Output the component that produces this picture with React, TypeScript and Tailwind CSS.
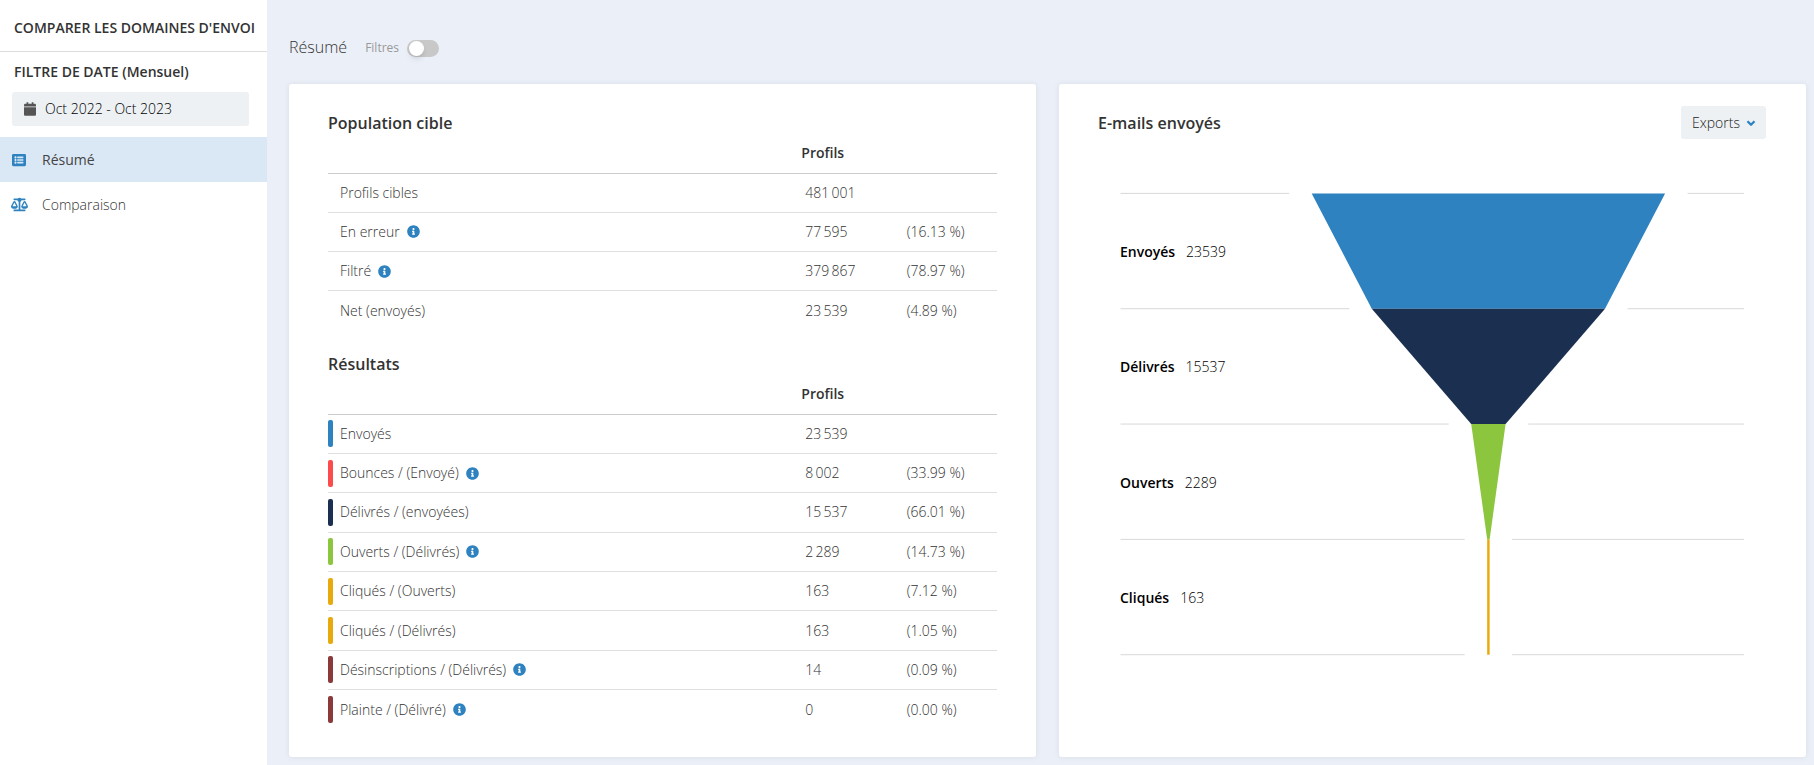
import { useState } from 'react';
import { ChevronDown } from 'lucide-react';
import { FaBalanceScale, FaCalendar, FaInfoCircle, FaListAlt } from 'react-icons/fa';

interface Row {
  label: string;
  value: string;
  percent?: string;
  info?: boolean;
  color?: string;
}

interface Step {
  label: string;
  value: number;
  color: string;
}

const POPULATION: Row[] = [
  { label: 'Profils cibles', value: '481\u2009001' },
  { label: 'En erreur', value: '77\u2009595', percent: '(16.13 %)', info: true },
  { label: 'Filtré', value: '379\u2009867', percent: '(78.97 %)', info: true },
  { label: 'Net (envoyés)', value: '23\u2009539', percent: '(4.89 %)' },
];

const RESULTS: Row[] = [
  { label: 'Envoyés', value: '23\u2009539', color: 'bg-[#2e82c0]' },
  { label: 'Bounces / (Envoyé)', value: '8\u2009002', percent: '(33.99 %)', info: true, color: 'bg-[#fb4b4b]' },
  { label: 'Délivrés / (envoyées)', value: '15\u2009537', percent: '(66.01 %)', color: 'bg-[#1b2f50]' },
  { label: 'Ouverts / (Délivrés)', value: '2\u2009289', percent: '(14.73 %)', info: true, color: 'bg-[#8cc63f]' },
  { label: 'Cliqués / (Ouverts)', value: '163', percent: '(7.12 %)', color: 'bg-[#e8a90c]' },
  { label: 'Cliqués / (Délivrés)', value: '163', percent: '(1.05 %)', color: 'bg-[#e8a90c]' },
  { label: 'Désinscriptions / (Délivrés)', value: '14', percent: '(0.09 %)', info: true, color: 'bg-[#8b3a3a]' },
  { label: 'Plainte / (Délivré)', value: '0', percent: '(0.00 %)', info: true, color: 'bg-[#8b3a3a]' },
];

const STEPS: Step[] = [
  { label: 'Envoyés', value: 23539, color: '#2e82c0' },
  { label: 'Délivrés', value: 15537, color: '#1b2f50' },
  { label: 'Ouverts', value: 2289, color: '#8cc63f' },
  { label: 'Cliqués', value: 163, color: '#e8a90c' },
];

// Funnel geometry, in viewBox units
const CHART_W = 625;
const CENTER = 368.4;
const MAX_W = 353.4;
const STEP_H = 115.33;
const LINE_GAP = 22.5;

function Funnel({ steps }: { steps: Step[] }) {
  const half = (i: number) => (steps[Math.min(i, steps.length - 1)].value / steps[0].value) * (MAX_W / 2);
  const y = (i: number) => 1.4 + i * STEP_H;

  return (
    <svg viewBox={`0 0 ${CHART_W} 464`} className="block w-full" role="img" aria-label="E-mails envoyés">
      {[...steps, null].map((_, i) => (
        <g key={i} stroke="#d8d8d8" strokeWidth="1">
          <line x1="0.5" x2={CENTER - half(i) - LINE_GAP} y1={y(i)} y2={y(i)} />
          <line x1={CENTER + half(i) + LINE_GAP} x2="624" y1={y(i)} y2={y(i)} />
        </g>
      ))}
      {steps.map((s, i) => (
        <g key={s.label}>
          <polygon
            fill={s.color}
            points={`${CENTER - half(i)},${y(i)} ${CENTER + half(i)},${y(i)} ${CENTER + half(i + 1)},${y(i + 1)} ${CENTER - half(i + 1)},${y(i + 1)}`}
          />
          <text x="0" y={y(i) + STEP_H / 2 + 6} fontSize="14" fill="#000">
            <tspan fontWeight="600">{s.label}</tspan>
            <tspan dx="11" fontWeight="300">{s.value}</tspan>
          </text>
        </g>
      ))}
    </svg>
  );
}

function StatsTable({ title, rows, className }: { title: string; rows: Row[]; className: string }) {
  return (
    <table aria-label={title} className={`w-full table-fixed border-collapse text-sm ${className}`}>
      <thead>
        <tr className="border-b border-[#cccccc] h-[34px]">
          <td className="w-[70%]" />
          <th className="w-[15%] pl-[5px] pb-1.5 text-left align-middle font-semibold">Profils</th>
          <td className="w-[15%]" />
        </tr>
      </thead>
      <tbody>
        {rows.map((r) => (
          <tr key={r.label} className="h-[39px] border-b border-[#e0e0e0] last:border-b-0">
            <td>
              <div className={`flex items-center ${r.color ? 'gap-[7px]' : 'pl-3'}`}>
                {r.color && <span className={`h-[27px] w-[5px] rounded-xs ${r.color}`} />}
                <span>{r.label}</span>
                {r.info && <FaInfoCircle className={`size-[13px] text-[#2e82c0] ${r.color ? '' : 'ml-[7px]'}`} />}
              </div>
            </td>
            <td className="pl-[9px]">{r.value}</td>
            <td className="pl-2.5">{r.percent}</td>
          </tr>
        ))}
      </tbody>
    </table>
  );
}

export default function App() {
  const [filters, setFilters] = useState(false);

  return (
    <div className="flex min-h-screen bg-[#ebeff7] font-['Open_Sans',sans-serif] text-sm font-light text-[#333333]">
      <aside className="w-[267px] shrink-0 bg-white">
        <h1 className="flex h-[52px] items-center border-b border-[#dddddd] pl-3.5 pt-1 whitespace-nowrap font-semibold">
          COMPARER LES DOMAINES D'ENVOI
        </h1>
        <h2 className="flex h-10 items-center pl-3.5 font-semibold">FILTRE DE DATE (Mensuel)</h2>
        <button className="ml-3 mb-[11px] flex h-[34px] w-[237px] items-center gap-[9px] rounded-[3px] bg-[#edf1f4] pl-3 text-black">
          <FaCalendar className="h-3.5 w-3 text-[#555555]" />
          Oct 2022 - Oct 2023
        </button>
        <nav>
          <a href="#resume" className="flex h-[45px] items-center gap-4 bg-[#dae8f5] pl-3 font-normal text-[#444444]">
            <FaListAlt className="size-3.5 text-[#2e82c0]" />
            Résumé
          </a>
          <a href="#comparaison" className="flex h-[45px] items-center gap-3.5 pl-[11px]">
            <FaBalanceScale className="size-[17px] text-[#2e82c0]" />
            Comparaison
          </a>
        </nav>
      </aside>

      <main className="min-w-0 flex-1 pl-[22px] pr-2 pb-[7px]">
        <div className="flex h-[84px] items-center gap-[18px] pt-2.5">
          <h2 className="text-base">Résumé</h2>
          <label className="flex items-center gap-2 pt-0.5 text-xs font-normal text-[#999999]">
            Filtres
            <input
              type="checkbox"
              checked={filters}
              onChange={(e) => setFilters(e.target.checked)}
              className="h-[17px] w-8 cursor-pointer appearance-none rounded-full bg-[#c8c8c8] before:block before:size-[15px] before:translate-x-0.5 before:translate-y-px before:rounded-full before:bg-white before:shadow-md before:content-[''] checked:bg-[#2e82c0] checked:before:translate-x-4"
            />
          </label>
        </div>

        <div className="grid grid-cols-2 gap-[23px]">
          <section className="rounded-[3px] bg-white px-[39px] pt-[22px] pb-7 shadow-[0_0_6px_rgba(0,0,0,0.08)]">
            <h3 className="flex h-[33px] items-center text-base font-semibold">Population cible</h3>
            <StatsTable title="Population cible" rows={POPULATION} className="h-[191px]" />
            <h3 className="mt-[17px] flex h-[33px] items-center text-base font-semibold">Résultats</h3>
            <StatsTable title="Résultats" rows={RESULTS} className="h-[349px]" />
          </section>

          <section className="rounded-[3px] bg-white px-[39px] pt-[22px] shadow-[0_0_6px_rgba(0,0,0,0.08)]">
            <div className="flex h-[33px] items-center justify-between pr-px">
              <h3 className="text-base font-semibold">E-mails envoyés</h3>
              <button className="flex h-[33px] items-center gap-1 rounded-[3px] bg-[#edf1f4] pl-[11px] pr-2 text-[#222222]">
                Exports
                <ChevronDown className="size-3.5 text-[#2e82c0]" strokeWidth={4} strokeLinecap="butt" />
              </button>
            </div>
            <div className="mt-[53px] px-[22px]">
              <Funnel steps={STEPS} />
            </div>
          </section>
        </div>
      </main>
    </div>
  );
}
